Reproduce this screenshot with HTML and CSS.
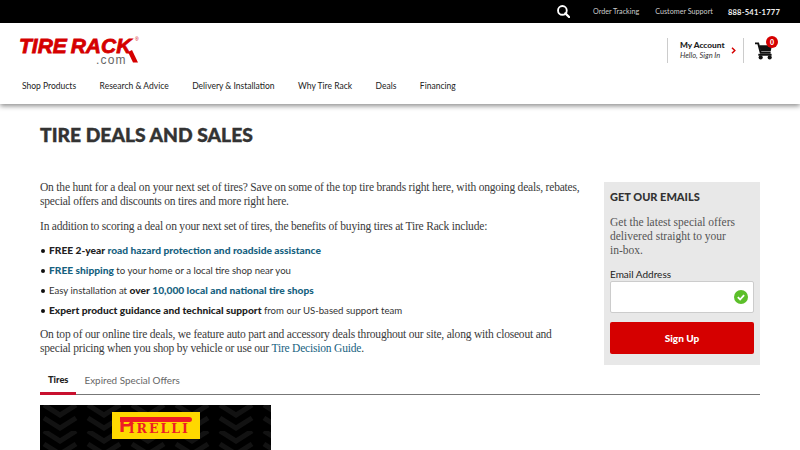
FILE: index.html
```html
<!DOCTYPE html>
<html lang="en">
<head>
    <meta charset="UTF-8">
    <meta name="viewport" content="width=device-width, initial-scale=1.0">
    <title>Tire Deals and Sales</title>
    <link rel="stylesheet" href="styles.css">
</head>
<body>

<div class="topbar">
    <svg class="search-icon" width="13" height="13" viewBox="0 0 14 14"><circle cx="5.8" cy="5.8" r="4.7" fill="none" stroke="#fff" stroke-width="2"/><path d="M9 9l4 4" stroke="#fff" stroke-width="2.4" stroke-linecap="round"/></svg>
    <a class="top-link track-link">Order Tracking</a>
    <a class="top-link support-link">Customer Support</a>
    <a class="top-phone">888-541-1777</a>
</div>

<header class="site-header">
    <div class="header-row">
        <div class="logo">
            <div class="logo-main">TIRE RACK</div>
            <span class="logo-reg">®</span>
            <svg class="logo-tail" width="14" height="15" viewBox="0 0 14 15"><path d="M3 2L8 12.5H13L7 0z" fill="#d50000"/></svg>
            <div class="logo-com">.com</div>
        </div>
        <div class="account">
            <div class="account-text">
                <div class="account-title">My Account</div>
                <div class="account-sub">Hello, Sign In</div>
            </div>
            <svg class="account-arrow" width="5" height="7" viewBox="0 0 5 7"><path d="M1 .8L3.8 3.5 1 6.2" fill="none" stroke="#d50000" stroke-width="1.5"/></svg>
        </div>
        <div class="cart">
            <svg width="18" height="18" viewBox="0 0 19 19"><path d="M0 1.5h3.4L6 11.5h10.5" fill="none" stroke="#111" stroke-width="2"/><path d="M4.5 3.5H18l-1.5 6.5H6z" fill="#111"/><rect x="3.5" y="12.5" width="14" height="2" fill="#111"/><circle cx="6" cy="16.3" r="2.2" fill="#111"/><circle cx="15.5" cy="16.3" r="2.2" fill="#111"/></svg>
            <span class="cart-badge">0</span>
        </div>
    </div>
    <nav class="main-nav">
        <a>Shop Products</a>
        <a>Research &amp; Advice</a>
        <a>Delivery &amp; Installation</a>
        <a>Why Tire Rack</a>
        <a>Deals</a>
        <a>Financing</a>
    </nav>
</header>

<main class="page">
    <h1>TIRE DEALS AND SALES</h1>

    <div class="content">
        <div class="copy">
            <p>On the hunt for a deal on your next set of tires? Save on some of the top tire brands right here, with ongoing deals, rebates, special offers and discounts on tires and more right here.</p>
            <p>In addition to scoring a deal on your next set of tires, the benefits of buying tires at Tire Rack include:</p>
            <ul>
                <li><b>FREE 2-year</b> <a class="link-strong">road hazard protection and roadside assistance</a></li>
                <li><a class="link-strong">FREE shipping</a> to your home or a local tire shop near you</li>
                <li>Easy installation at <b>over</b> <a class="link-strong">10,000 local and national tire shops</a></li>
                <li><b>Expert product guidance and technical support</b> from our US-based support team</li>
            </ul>
            <p>On top of our online tire deals, we feature auto part and accessory deals throughout our site, along with closeout and special pricing when you shop by vehicle or use our <a class="link-plain">Tire Decision Guide</a>.</p>
        </div>

        <aside class="signup">
            <h2>GET OUR EMAILS</h2>
            <p>Get the latest special offers delivered straight to your in-box.</p>
            <label>Email Address</label>
            <div class="email-box">
                <svg width="14" height="14" viewBox="0 0 14 14"><circle cx="7" cy="7" r="7" fill="#5cbf2a"/><path d="M3.8 7.2l2.3 2.3 4-4.4" fill="none" stroke="#fff" stroke-width="1.8"/></svg>
            </div>
            <button>Sign Up</button>
        </aside>
    </div>

    <div class="tabs">
        <a class="tab active">Tires</a>
        <a class="tab">Expired Special Offers</a>
    </div>

    <div class="promo">
        <svg class="tread" width="231" height="45">
            <defs>
                <pattern id="chevrons" width="44" height="26" patternUnits="userSpaceOnUse">
                    <path d="M4 0l16 10L36 0M4 13l16 10 16-10" fill="none" stroke="#121212" stroke-width="5"/>
                </pattern>
            </defs>
            <rect width="231" height="45" fill="url(#chevrons)"/>
        </svg>
        <div class="pirelli">
            <span class="pirelli-bar"></span>
            <span class="pirelli-p">P</span><span class="pirelli-rest">IRELLI</span>
        </div>
    </div>
</main>

</body>
</html>
```

FILE: styles.css
```css
html, body {
    height: 100%;
    overflow: hidden;
}
body {
    margin: 0;
    background-color: #fff;
    color: #333;
    font-family: "Lato", sans-serif;
}

.topbar {
    display: flex;
    align-items: center;
    justify-content: flex-end;
    height: 23px;
    padding-right: 20px;
    background-color: #000;
    color: #ccc;
}
.search-icon {
    margin-right: 23px;
}
.top-link {
    font-size: 7.2px;
}
.track-link {
    margin-right: 16px;
}
.support-link {
    margin-right: 15px;
}
.top-phone {
    color: #eee;
    font-weight: 700;
    font-size: 7.6px;
    letter-spacing: 0.2px;
}

.site-header {
    height: 81px;
    box-shadow: 0 2px 5px rgba(0, 0, 0, 0.45);
    position: relative;
}
.header-row {
    display: flex;
    align-items: flex-start;
    height: 54px;
    padding: 0 20px;
}
.logo {
    width: 120px;
    margin-top: 13px;
    margin-right: auto;
    position: relative;
    color: #d50000;
}
.logo-main {
    margin-left: -1px;
    font-family: "Liberation Sans", sans-serif;
    font-size: 21px;
    line-height: 20px;
    font-weight: 700;
    font-style: italic;
    letter-spacing: 0;
    word-spacing: -2px;
    white-space: nowrap;
    -webkit-text-stroke: 0.8px #d50000;
}
.logo-reg {
    position: absolute;
    left: 115px;
    top: 0;
    font-family: "Liberation Sans", sans-serif;
    font-size: 5px;
    line-height: 6px;
}
.logo-tail {
    position: absolute;
    left: 105px;
    top: 14px;
}
.logo-com {
    padding-left: 76px;
    color: #666;
    font-family: "Liberation Sans", sans-serif;
    font-size: 12px;
    line-height: 9px;
    letter-spacing: 1.2px;
}
.account {
    display: flex;
    align-items: center;
    height: 25px;
    margin-top: 15px;
    padding: 0 7px 0 12px;
    border-left: 1px solid #ccc;
    border-right: 1px solid #ccc;
}
.account-text {
    width: 49px;
    margin-right: 2px;
}
.account-title {
    color: #222;
    font-size: 8.3px;
    line-height: 11px;
    font-weight: 900;
}
.account-sub {
    color: #333;
    font-size: 7.5px;
    line-height: 10px;
    font-style: italic;
}
.cart {
    position: relative;
    width: 25px;
    height: 19px;
    margin-top: 19px;
    margin-left: 11px;
}
.cart-badge {
    position: absolute;
    left: 11px;
    top: -6px;
    width: 12px;
    height: 12px;
    border-radius: 50%;
    background-color: #d50000;
    color: #fff;
    font-size: 7px;
    font-weight: 900;
    line-height: 12px;
    text-align: center;
}
.main-nav {
    display: flex;
    gap: 23.5px;
    padding-left: 22px;
    color: #222;
    font-size: 8.5px;
    line-height: 18px;
}

.page {
    padding: 0 40px;
}
h1 {
    margin: 19px 0 33px;
    color: #333;
    font-size: 19.3px;
    line-height: 24px;
    font-weight: 900;
    -webkit-text-stroke: 0.4px #333;
}
.content {
    display: flex;
    justify-content: space-between;
    align-items: flex-start;
}
.copy {
    width: 542px;
    color: #3a3a3a;
    font-family: "Liberation Serif", serif;
    font-size: 11.5px;
    line-height: 14px;
    letter-spacing: -0.2px;
}
.copy p {
    margin: 0 0 11px;
}
.copy ul {
    margin: -1px 0 10px;
    padding: 0;
    list-style: none;
    font-family: "Lato", sans-serif;
    font-size: 9.6px;
    letter-spacing: 0;
    color: #333;
}
.copy li {
    height: 14px;
    margin-bottom: 6px;
}
.copy li:last-child {
    margin-bottom: 0;
}
.copy li::before {
    content: "";
    display: inline-block;
    width: 4px;
    height: 4px;
    margin: 0 4px 1px 1px;
    border-radius: 50%;
    background-color: #111;
}
.copy b {
    color: #222;
    font-size: 10.2px;
    font-weight: 900;
}
.link-strong {
    color: #17627f;
    font-size: 10.2px;
    font-weight: 900;
}
.link-plain {
    color: #17627f;
}

.signup {
    box-sizing: border-box;
    width: 156px;
    height: 183px;
    margin-top: 2px;
    padding: 7px 6px 0;
    background-color: #e8e8e8;
}
.signup h2 {
    margin: 0 0 11px;
    color: #333;
    font-size: 11px;
    line-height: 15px;
    font-weight: 900;
}
.signup p {
    width: 125px;
    margin: 0 0 10px;
    color: #555;
    font-family: "Liberation Serif", serif;
    font-size: 11.5px;
    line-height: 14px;
}
.signup label {
    display: block;
    color: #222;
    font-size: 10px;
    line-height: 14px;
}
.email-box {
    display: flex;
    align-items: center;
    justify-content: flex-end;
    box-sizing: border-box;
    height: 32px;
    padding-right: 5px;
    border: 1px solid #ccc;
    border-radius: 2px;
    background-color: #fff;
}
.signup button {
    display: block;
    width: 100%;
    height: 32px;
    margin-top: 9px;
    border: none;
    border-radius: 2px;
    background-color: #d50000;
    color: #fff;
    font-family: "Lato", sans-serif;
    font-size: 10px;
    font-weight: 900;
}

.tabs {
    display: flex;
    border-bottom: 1px solid #777;
}
.tab {
    padding: 0 8px;
    color: #666;
    font-size: 9.9px;
    line-height: 28px;
}
.tab.active {
    height: 26px;
    margin-bottom: -1px;
    border-bottom: 3px solid #c8102e;
    color: #222;
    font-size: 9.3px;
    font-weight: 900;
}

.promo {
    position: relative;
    width: 231px;
    height: 45px;
    margin-top: 10px;
    background-color: #000;
}
.tread {
    display: block;
}
.pirelli {
    position: absolute;
    left: 72px;
    top: 7px;
    display: flex;
    align-items: flex-end;
    box-sizing: border-box;
    width: 88px;
    height: 27px;
    padding: 0 0 6px 7px;
    background-color: #ffd800;
    color: #ee1c25;
    font-weight: 700;
}
.pirelli-bar {
    position: absolute;
    left: 8px;
    top: 5px;
    width: 72px;
    height: 5px;
    border-radius: 0 4px 3px 0;
    background-color: #ee1c25;
}
.pirelli-p {
    margin-right: -5px;
    font-family: "Liberation Sans", sans-serif;
    font-size: 22px;
    line-height: 16px;
}
.pirelli-rest {
    font-family: "DejaVu Serif", serif;
    font-size: 12.5px;
    line-height: 9px;
    letter-spacing: 2px;
}
```
